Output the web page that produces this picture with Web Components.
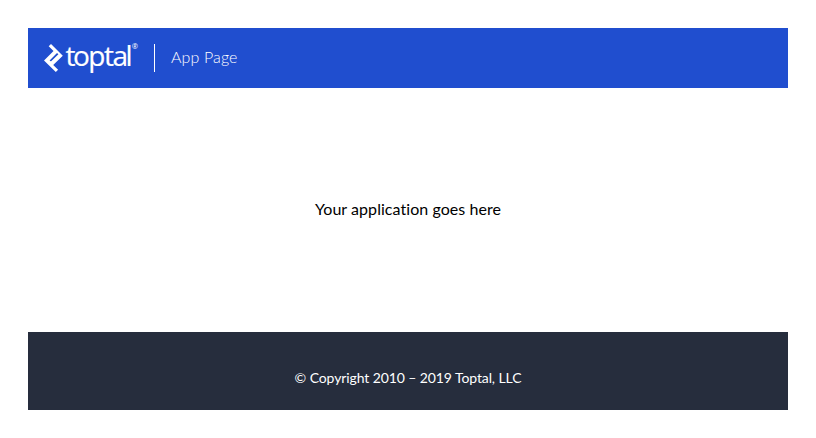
<!DOCTYPE html>
<html lang="en">
<head>
<meta charset="utf-8">
<title>App Page</title>
<style>
body { margin: 0; background: #fff; font-family: Lato, "Open Sans", sans-serif; font-variant-ligatures: none; }
</style>
</head>
<body>
<app-page>
  <app-header slot="header">App Page</app-header>
  <app-content>Your application goes here</app-content>
  <app-footer slot="footer">© Copyright 2010 – 2019 Toptal, LLC</app-footer>
</app-page>
<script>
const define = (name, html) => {
  const template = document.createElement('template');
  template.innerHTML = html;
  customElements.define(name, class extends HTMLElement {
    constructor() {
      super();
      this.attachShadow({ mode: 'open' }).append(template.content.cloneNode(true));
    }
  });
};

define('toptal-logo', `
<style>
:host { display: block; width: 94px; height: 28px; }
svg { display: block; overflow: visible; }
text { font-family: "Open Sans", sans-serif; fill: #fff; }
.word { stroke: #fff; stroke-width: .2px; }
</style>
<svg width="94" height="28" viewBox="0 0 94 28" aria-label="Toptal">
  <path fill="#fff" fill-rule="evenodd" d="M18.8 11.7 L7 0 L4.7 2.2 L9.5 7 L0 16.4 L11.8 28 L14.1 25.8 L9.2 21 Z M7.4 17 C6.8 17.6 6 16.9 5.6 16.4 L12.5 9.6 C13.1 9 13.9 9.7 14.4 10.2 Z"/>
  <text class="word" x="21.5 29.1 44.3 60.1 68.5 81.6" y="21.5" font-size="28">toptal</text>
  <text x="87.8" y="5.4" font-size="7.5">®</text>
</svg>`);

define('app-header', `
<style>
:host { display: flex; align-items: center; height: 60px; padding: 0 16px; box-sizing: border-box; background: #204ecf; color: #fff; }
.divider { width: 1px; height: 28px; margin: 0 16px; background: #fff; }
.title { font-size: 16px; line-height: 24px; font-weight: 300; letter-spacing: .13px; padding-bottom: 2px; white-space: nowrap; }
</style>
<toptal-logo></toptal-logo><div class="divider"></div><div class="title"><slot></slot></div>`);

define('app-content', `
<style>
:host { display: flex; align-items: center; justify-content: center; height: 244px; padding-bottom: 2px; box-sizing: border-box; color: #000; font-size: 16px; line-height: 24px; letter-spacing: .06px; }
</style>
<span><slot></slot></span>`);

define('app-footer', `
<style>
:host { display: flex; justify-content: center; height: 78px; padding-top: 35px; box-sizing: border-box; background: #262d3d; color: #fff; font-size: 14px; line-height: 22px; letter-spacing: -.1px; }
</style>
<span><slot></slot></span>`);

define('app-page', `
<style>
:host { display: flex; flex-direction: column; padding: 28px; }
</style>
<slot name="header"></slot><slot></slot><slot name="footer"></slot>`);
</script>
</body>
</html>
